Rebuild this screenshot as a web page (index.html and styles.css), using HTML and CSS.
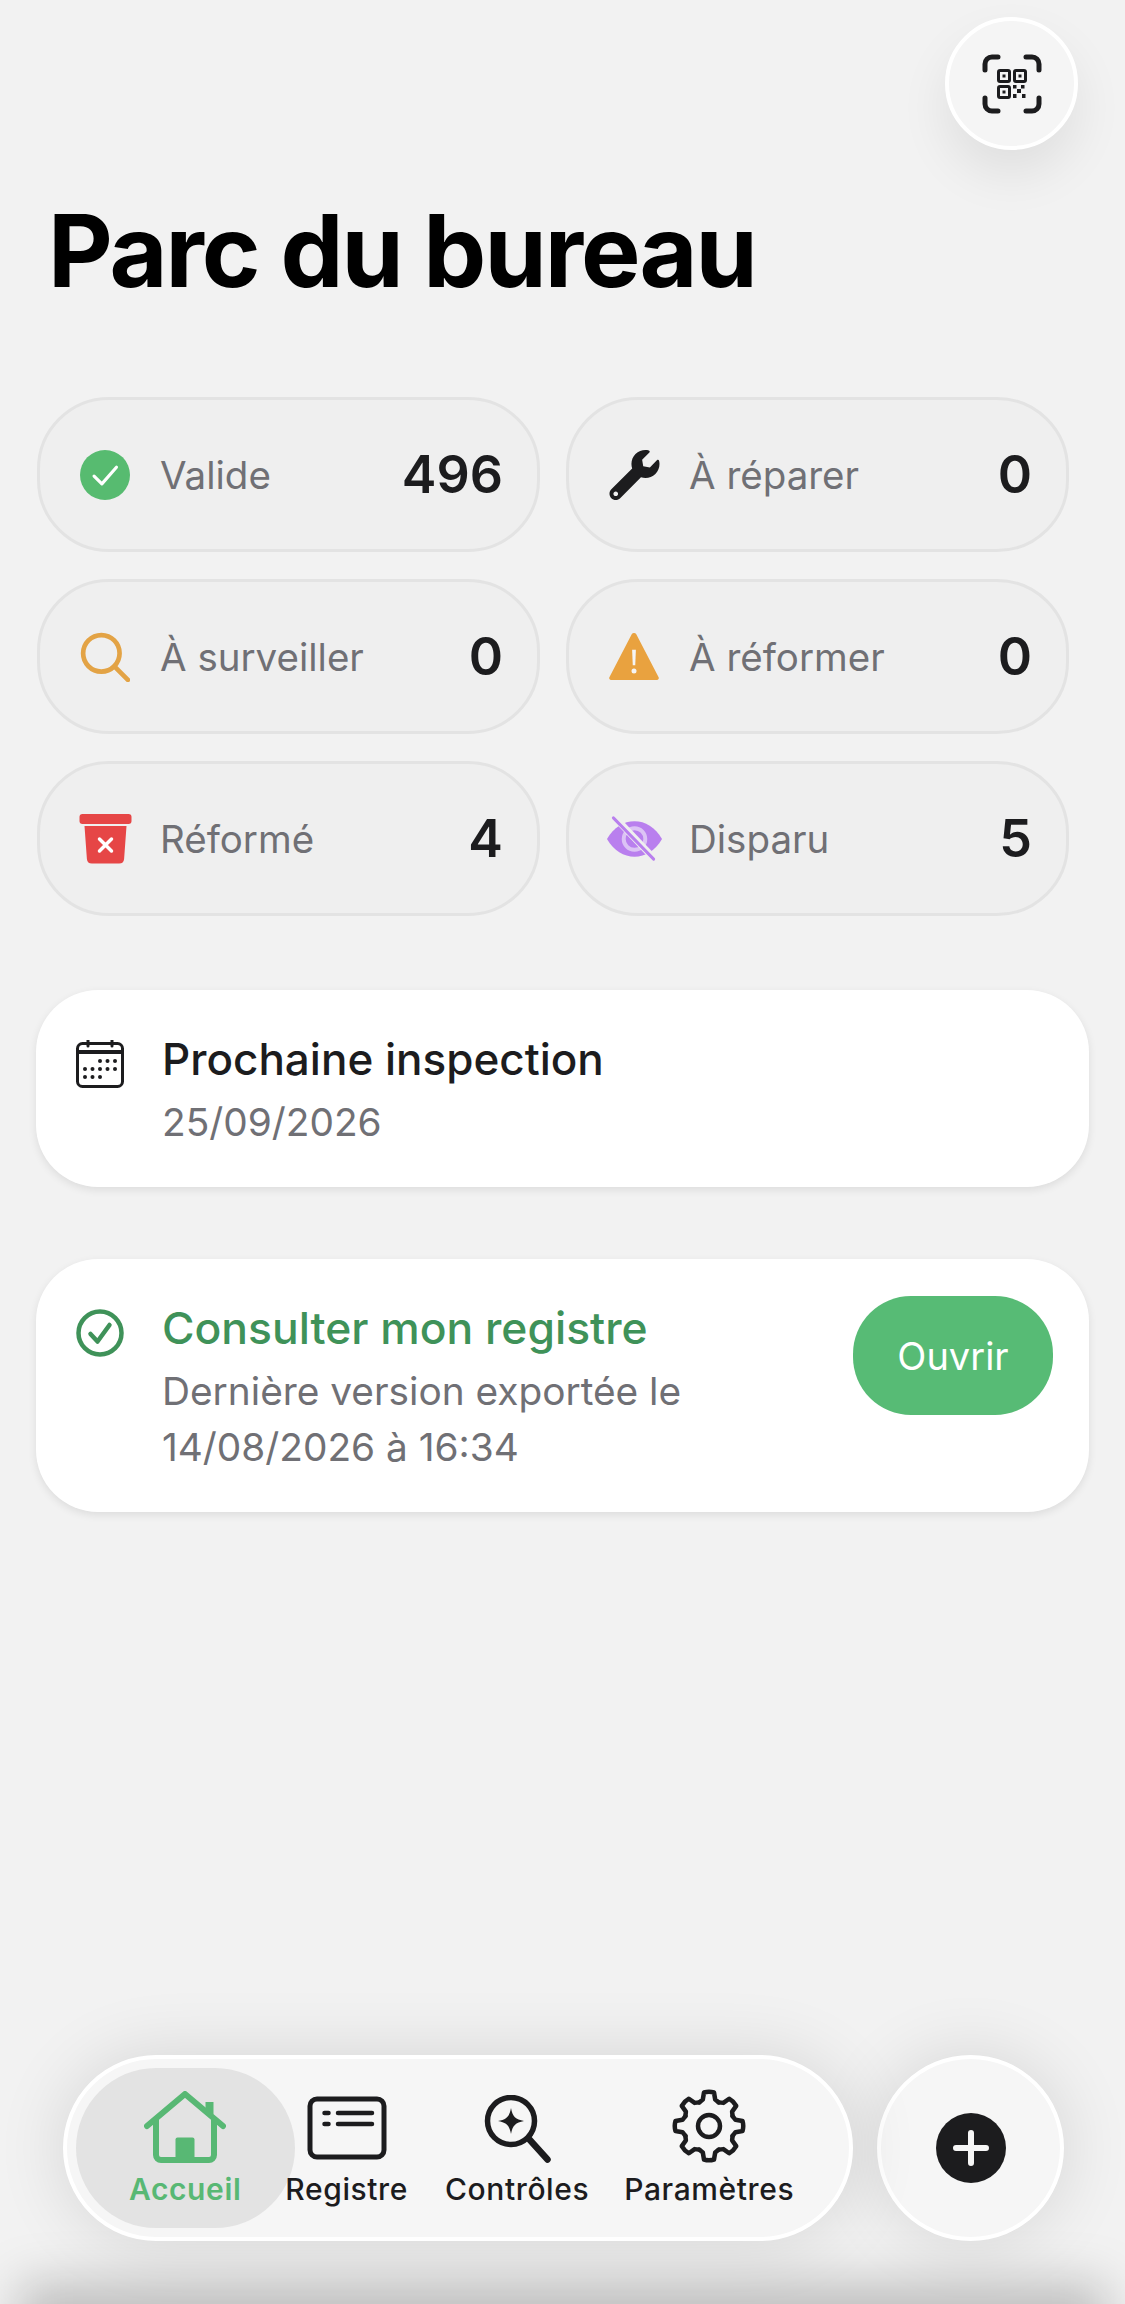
FILE: index.html
```html
<html lang="fr">
  <head>
    <meta charset="utf-8">
    <title>Parc du bureau</title>
    <link rel="stylesheet" href="styles.css">
  </head>
  <body>
    <div id="screen">
      <div id="top-bar">
        <button id="scan-button" class="round-button" type="button">
          <svg width="60" height="60" viewBox="0 0 60 60" fill="none" stroke="#1c1c1e">
            <path d="M3 16V10a7 7 0 0 1 7-7h6M44 3h6a7 7 0 0 1 7 7v6M57 44v6a7 7 0 0 1-7 7h-6M16 57h-6a7 7 0 0 1-7-7v-6" stroke-width="5" stroke-linecap="round"/>
            <rect x="16.500" y="16.500" width="11" height="11" rx="1.500" stroke-width="3"/>
            <rect x="32.500" y="16.500" width="11" height="11" rx="1.500" stroke-width="3"/>
            <rect x="16.500" y="32.500" width="11" height="11" rx="1.500" stroke-width="3"/>
            <path d="M20.500 20.500h3v3h-3zM36.500 20.500h3v3h-3zM20.500 36.500h3v3h-3zM31 31h3.500v3.500H31zM39 31h3.500v3.500H39zM35 35h4v4h-4zM31 40h3.500v4H31zM40 40h3.500v4H40z" fill="#1c1c1e" stroke="none"/>
          </svg>
        </button>
      </div>

      <h1>Parc du bureau</h1>

      <div id="status-grid">
        <div class="status-pill">
          <svg class="status-icon" viewBox="0 0 48 48">
            <circle cx="24" cy="24" r="24" fill="#57bb70"/>
            <path d="M13.500 25l7.500 7.500 14-16" fill="none" stroke="#fff" stroke-width="3" stroke-linecap="round" stroke-linejoin="round"/>
          </svg>
          <span class="status-label">Valide</span>
          <b class="status-count">496</b>
        </div>
        <div class="status-pill">
          <svg class="status-icon wide" viewBox="0 0 512 512">
            <path fill="#1c1c1e" d="M507.730 109.100c-2.240-9.030-13.540-12.090-20.120-5.510l-74.360 74.360-67.880-11.310-11.310-67.880 74.360-74.360c6.620-6.620 3.430-17.900-5.660-20.160-47.380-11.740-99.550.91-136.580 37.930-39.640 39.640-50.550 97.100-34.050 147.200L18.740 402.760c-24.990 24.990-24.990 65.510 0 90.500 24.990 24.990 65.510 24.990 90.500 0l213.210-213.210c50.120 16.710 107.470 5.680 147.370-34.220 37.070-37.070 49.700-89.320 37.910-136.730zM64 472c-13.250 0-24-10.750-24-24 0-13.260 10.750-24 24-24s24 10.740 24 24c0 13.250-10.750 24-24 24z"/>
          </svg>
          <span class="status-label">À réparer</span>
          <b class="status-count">0</b>
        </div>
        <div class="status-pill">
          <svg class="status-icon" viewBox="0 0 48 48" fill="none" stroke="#e3a345" stroke-width="4.500" stroke-linecap="round">
            <circle cx="20.500" cy="20.500" r="17.500"/>
            <path d="M33 33l13 13"/>
          </svg>
          <span class="status-label">À surveiller</span>
          <b class="status-count">0</b>
        </div>
        <div class="status-pill">
          <svg class="status-icon" viewBox="0 0 48 48">
            <path fill="#e9a23f" d="M21.800 2.200a2.500 2.500 0 0 1 4.400 0l21.300 41a1.800 1.800 0 0 1-1.600 2.800H2.100a1.800 1.800 0 0 1-1.600-2.800z"/>
            <path fill="#f5f5f5" d="M22.200 17h3.600l-.6 15h-2.400z"/>
            <circle cx="24" cy="37.500" r="2.400" fill="#f5f5f5"/>
          </svg>
          <span class="status-label">À réformer</span>
          <b class="status-count">0</b>
        </div>
        <div class="status-pill">
          <svg class="status-icon wide" viewBox="0 0 52 50">
            <rect x="0" y="0" width="52" height="10" rx="3" fill="#e64646"/>
            <path fill="#e64646" d="M5 12h42l-2.400 33a5 5 0 0 1-5 4.500H12.400a5 5 0 0 1-5-4.500z"/>
            <path d="M20 25l12 12M32 25L20 37" stroke="#fff" stroke-width="3.500" stroke-linecap="round"/>
          </svg>
          <span class="status-label">Réformé</span>
          <b class="status-count">4</b>
        </div>
        <div class="status-pill">
          <svg class="status-icon wide" viewBox="0 0 56 46">
            <path fill="#b97fee" d="M0 23C7 11 17 5 28 5s21 6 28 18c-7 12-17 18-28 18S7 35 0 23z"/>
            <circle cx="28" cy="23" r="11" fill="none" stroke="#dcc3f5" stroke-width="4"/>
            <path d="M8 1l41 43" stroke="#efefef" stroke-width="7"/>
            <path d="M6.500 1.500l41 42" stroke="#b97fee" stroke-width="3" stroke-linecap="round"/>
          </svg>
          <span class="status-label">Disparu</span>
          <b class="status-count">5</b>
        </div>
      </div>

      <div class="info-card" id="inspection-card">
        <svg class="card-icon" viewBox="0 0 48 48">
          <path d="M12 0v6M36 0v6" stroke="#1c1c1e" stroke-width="3" stroke-linecap="round"/>
          <rect x="1.500" y="3.500" width="45" height="43" rx="5" fill="none" stroke="#1c1c1e" stroke-width="3"/>
          <path d="M2 12h44" stroke="#1c1c1e" stroke-width="4"/>
          <g fill="#1c1c1e">
            <circle cx="24" cy="21" r="2"/><circle cx="31.500" cy="21" r="2"/><circle cx="39" cy="21" r="2"/>
            <circle cx="9" cy="29" r="2"/><circle cx="16.500" cy="29" r="2"/><circle cx="24" cy="29" r="2"/><circle cx="31.500" cy="29" r="2"/><circle cx="39" cy="29" r="2"/>
            <circle cx="9" cy="37" r="2"/><circle cx="16.500" cy="37" r="2"/><circle cx="24" cy="37" r="2"/>
          </g>
        </svg>
        <div class="card-text">
          <div class="card-title">Prochaine inspection</div>
          <div class="card-sub">25/09/2026</div>
        </div>
      </div>

      <div class="info-card" id="register-card">
        <svg class="card-icon" viewBox="0 0 48 48" fill="none" stroke="#3f9259">
          <circle cx="24" cy="24" r="21.500" stroke-width="4.500"/>
          <path d="M14.500 25l7 7.500 12-16.500" stroke-width="4.500" stroke-linecap="round" stroke-linejoin="round"/>
        </svg>
        <div class="card-text">
          <div class="card-title green">Consulter mon registre</div>
          <div class="card-sub">Dernière version exportée le<br>14/08/2026 à 16:34</div>
        </div>
        <button id="open-button" type="button">Ouvrir</button>
      </div>
    </div>

    <div id="tab-row">
      <nav id="tabs">
        <div class="tab active">
          <svg width="82" height="72" viewBox="0 0 82 72" fill="none" stroke="#58b874" stroke-width="6" stroke-linecap="round" stroke-linejoin="round">
            <path d="M3 35L41 3l38 32"/>
            <path d="M65.500 23V11" stroke-width="8" stroke-linecap="butt"/>
            <path d="M12 29v35a5 5 0 0 0 5 5h48a5 5 0 0 0 5-5V29"/>
            <rect x="31.500" y="46.500" width="19" height="22" rx="2" fill="#58b874" stroke="none"/>
          </svg>
          <span>Accueil</span>
        </div>
        <div class="tab tab-register">
          <svg width="80" height="64" viewBox="0 0 80 64" fill="none" stroke="#1c1c1e">
            <rect x="3" y="3" width="74" height="58" rx="7" stroke-width="5"/>
            <path d="M17.500 17h4M17.500 28h4M31 17h34M31 28h34" stroke-width="4.500" stroke-linecap="round"/>
          </svg>
          <span>Registre</span>
        </div>
        <div class="tab">
          <svg width="68" height="68" viewBox="0 0 68 68" fill="none" stroke="#1c1c1e">
            <circle cx="28" cy="26" r="23.500" stroke-width="5.500"/>
            <path d="M46 44l18.500 20.500" stroke-width="6.500" stroke-linecap="round"/>
            <path fill="#1c1c1e" stroke="none" d="M28 13c1.500 8.500 4.500 11.500 13 13-8.500 1.500-11.500 4.500-13 13-1.500-8.500-4.500-11.500-13-13 8.500-1.500 11.500-4.500 13-13z"/>
          </svg>
          <span>Contrôles</span>
        </div>
        <div class="tab tab-settings">
          <svg width="74" height="74" viewBox="-37 -37 74 74" fill="none" stroke="#1c1c1e" stroke-width="4.500" stroke-linejoin="round" stroke-linecap="round">
            <defs>
              <path id="gear-tooth" d="M-9.800 -23.600L-6.200 -26.500L-5 -33.500Q0 -35 5 -33.500L6.200 -26.500L9.800 -23.600"/>
            </defs>
            <use href="#gear-tooth"/>
            <use href="#gear-tooth" transform="rotate(45)"/>
            <use href="#gear-tooth" transform="rotate(90)"/>
            <use href="#gear-tooth" transform="rotate(135)"/>
            <use href="#gear-tooth" transform="rotate(180)"/>
            <use href="#gear-tooth" transform="rotate(225)"/>
            <use href="#gear-tooth" transform="rotate(270)"/>
            <use href="#gear-tooth" transform="rotate(315)"/>
            <circle r="11"/>
          </svg>
          <span>Paramètres</span>
        </div>
      </nav>
      <button id="add-button" class="round-button" type="button">
        <svg width="70" height="70" viewBox="0 0 70 70">
          <circle cx="35" cy="35" r="35" fill="#1c1c1e"/>
          <path d="M35 20v30M20 35h30" stroke="#f6f6f6" stroke-width="6" stroke-linecap="round"/>
        </svg>
      </button>
    </div>
  </body>
</html>
```

FILE: styles.css
```css
html, body {
  margin: 0;
  width: 1125px;
  height: 2304px;
  overflow: hidden;
}
body {
  position: relative;
  display: flex;
  flex-direction: column;
  justify-content: space-between;
  background: #f2f2f2;
  color: #1c1c1e;
  font-family: Inter, 'Liberation Sans', sans-serif;
}
body::after {
  content: '';
  position: absolute;
  left: 20px;
  right: 20px;
  bottom: -60px;
  height: 80px;
  background: rgba(0, 0, 0, .22);
  filter: blur(25px);
}
button {
  padding: 0;
  font-family: inherit;
  cursor: pointer;
}
#screen {
  padding: 17px 36px 0;
}
#top-bar {
  display: flex;
  justify-content: flex-end;
  padding-right: 11px;
}
.round-button {
  display: flex;
  align-items: center;
  justify-content: center;
  background: #f5f5f5;
  border: solid 4px #fff;
  border-radius: 50%;
}
#scan-button {
  width: 133px;
  height: 133px;
  box-shadow: 0 24px 50px rgba(0, 0, 0, .08);
}
h1 {
  margin: 41px 0 0 12px;
  font-size: 100px;
  line-height: 120px;
  font-weight: 700;
  letter-spacing: -2px;
  color: #000;
}
#status-grid {
  display: grid;
  grid-template-columns: 503px 503px;
  gap: 27px 26px;
  margin: 86px 0 0 1px;
}
.status-pill {
  box-sizing: border-box;
  height: 155px;
  display: flex;
  align-items: center;
  padding: 0 34px 0 40px;
  background: #efefef;
  border: solid 3px #e3e3e3;
  border-radius: 72px;
}
.status-icon {
  flex: none;
  width: 50px;
  height: 50px;
  margin-right: 30px;
}
.status-icon.wide {
  width: 55px;
  margin-left: -2px;
  margin-right: 27px;
}
.status-label {
  flex: 1;
  font-size: 38.5px;
  color: #707075;
}
.status-count {
  font-size: 52px;
  font-weight: 600;
}
.info-card {
  box-sizing: border-box;
  display: flex;
  padding: 0 36px 0 40px;
  background: #fff;
  border-radius: 62px;
  box-shadow: 0 3px 8px rgba(0, 0, 0, .09);
}
#inspection-card {
  height: 197px;
  margin-top: 74px;
}
#register-card {
  height: 253px;
  margin-top: 72px;
}
.card-icon {
  flex: none;
  width: 48px;
  height: 48px;
  margin: 50px 38px 0 0;
}
.card-text {
  flex: 1;
  padding-top: 40px;
}
.card-title {
  font-size: 44px;
  line-height: 58px;
  font-weight: 500;
}
.card-title.green {
  font-size: 44.4px;
  color: #3f9259;
}
.card-sub {
  margin-top: 6px;
  font-size: 38.8px;
  line-height: 56px;
  color: #707075;
}
#open-button {
  align-self: flex-start;
  width: 200px;
  height: 119px;
  margin-top: 37px;
  background: #57bb75;
  border: none;
  border-radius: 58px;
  color: #fff;
  font-size: 38px;
}
#tab-row {
  position: relative;
  z-index: 1;
  display: flex;
  gap: 24px;
  margin: 0 0 63px 63px;
}
#tabs {
  position: relative;
  z-index: 0;
  box-sizing: border-box;
  width: 790px;
  height: 186px;
  display: flex;
  align-items: center;
  gap: 37px;
  padding-left: 62px;
  background: #f6f6f6;
  border: solid 4px #fff;
  border-radius: 93px;
  box-shadow: 0 0 70px rgba(0, 0, 0, .12);
}
.tab {
  position: relative;
  display: flex;
  flex-direction: column;
  align-items: center;
  justify-content: flex-end;
  height: 118px;
  font-size: 30px;
  font-weight: 500;
  letter-spacing: .6px;
}
.tab svg {
  flex: none;
  margin-bottom: 8px;
}
.tab-register svg {
  margin-bottom: 11px;
}
.tab-settings {
  margin-left: -2px;
}
.tab.active {
  margin-right: 7px;
  color: #58b874;
  font-weight: 600;
}
.tab.active::before {
  content: '';
  position: absolute;
  z-index: -1;
  left: -53px;
  right: -54px;
  top: -21px;
  bottom: -21px;
  background: #e3e3e3;
  border-radius: 80px;
}
#add-button {
  width: 187px;
  height: 186px;
  background: #f6f6f6;
  box-shadow: 0 0 70px rgba(0, 0, 0, .12);
}
```
